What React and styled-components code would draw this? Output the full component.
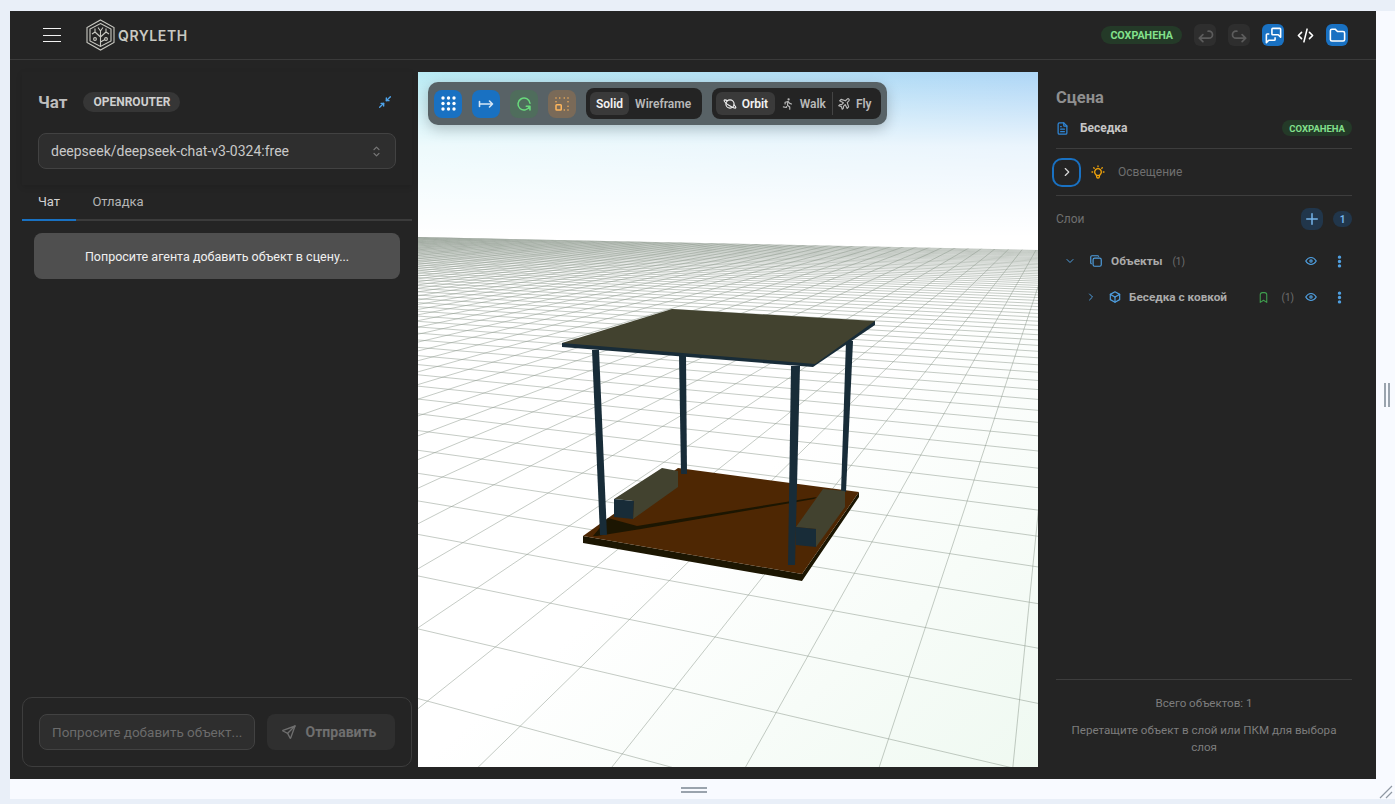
import React from 'react'
import styled, { createGlobalStyle } from 'styled-components'
import {
  TbArrowBack, TbArrowForward, TbMessages, TbCode, TbFolder, TbArrowsDiagonalMinimize2, TbSelector,
  TbFileText, TbChevronRight, TbChevronDown, TbBulb, TbPlus, TbCopy, TbEye, TbDotsVertical, TbBox,
  TbBookmark, TbSend, TbRotate, TbBoxAlignBottomLeft, TbPlanet, TbRun, TbPlaneTilt,
} from 'react-icons/tb'

const GlobalStyle = createGlobalStyle`
  html, body { margin: 0; padding: 0; background: #e9eff8; overflow: hidden; }
  body { font-family: "Roboto", "Noto Sans", sans-serif; }
  * { box-sizing: border-box; }
`

const Page = styled.div`
  width: 1395px;
  height: 804px;
  padding: 11px 0 5px 10px;
`
const Shell = styled.div`
  position: relative;
  width: 100%;
  height: 100%;
  background: #f8faff;
`
const Frame = styled.div`
  width: 1366px;
  height: 768px;
  background: #242424;
  display: flex;
  flex-direction: column;
`
const Header = styled.header`
  height: 49px;
  flex: none;
  border-bottom: 1px solid #3a3a3a;
  display: flex;
  align-items: center;
  padding: 0 28px 0 33px;
`
const Burger = styled.div`
  width: 18px;
  height: 14px;
  display: flex;
  flex-direction: column;
  justify-content: space-between;
  margin-right: 25px;
  span { display: block; height: 1px; background: #f2f2f2; }
`
const Brand = styled.div`
  display: flex;
  align-items: center;
  gap: 3px;
  color: #c9c9c2;
  font-family: "Inter", sans-serif;
  font-size: 14px;
  font-weight: 600;
  letter-spacing: 0.6px;
`
const Spacer = styled.div`
  flex: 1;
`
const Badge = styled.span`
  display: inline-flex;
  align-items: center;
  justify-content: center;
  border-radius: 10px;
  background: #243a28;
  color: #83e08c;
  font-size: ${p => p.$small ? '9.5px' : '10.7px'};
  font-weight: 700;
  height: ${p => p.$small ? '16px' : '18px'};
  padding: 0 ${p => p.$small ? 7 : 9}px;
`
const HeaderButtons = styled.div`
  display: flex;
  align-items: center;
  gap: 12px;
  margin-left: 12px;
`
const IconButton = styled.div`
  width: 22px;
  height: 22px;
  margin: 0 ${p => p.$tight ? '-2px' : '0'};
  border-radius: 6px;
  display: flex;
  align-items: center;
  justify-content: center;
  background: ${p => p.$bg || 'transparent'};
  color: ${p => p.$color || '#fff'};
  font-size: ${p => p.$size || 19}px;
`
const Body = styled.div`
  flex: 1;
  display: flex;
  min-height: 0;
`
const ChatPanel = styled.aside`
  width: 408px;
  flex: none;
  display: flex;
  flex-direction: column;
  padding: 12px 6px 12px 12px;
`
const ChatHead = styled.div`
  display: flex;
  flex-direction: column;
  padding: 20px 16px 16px;
  box-shadow: 0 2px 6px rgba(0, 0, 0, 0.12);
`
const TitleRow = styled.div`
  display: flex;
  align-items: center;
  height: 20px;
  margin-bottom: 21px;
`
const ChatTitle = styled.div`
  color: #bdbdbd;
  font-size: 17px;
  font-weight: 700;
  margin-right: 16px;
`
const GrayPill = styled.span`
  background: #363636;
  color: #d0d0d0;
  font-size: 12px;
  font-weight: 700;
  border-radius: 10px;
  height: 20px;
  padding: 0 10px;
  display: inline-flex;
  align-items: center;
`
const Collapse = styled.div`
  color: #4ea3ea;
  font-size: 16px;
  display: flex;
  margin-right: 3px;
`
const ModelSelect = styled.div`
  height: 36px;
  width: 358px;
  border-radius: 8px;
  background: #2e2e2e;
  border: 1px solid #424242;
  color: #c9c9c9;
  font-size: 14px;
  display: flex;
  align-items: center;
  justify-content: space-between;
  padding: 0 11px 0 12px;
  svg { color: #777; font-size: 15px; }
`
const Tabs = styled.div`
  display: flex;
  border-bottom: 2px solid #3b3b3b;
  height: 37px;
  margin-top: -1px;
`
const Tab = styled.div`
  width: ${p => p.$w}px;
  font-size: 13px;
  text-align: center;
  color: ${p => p.$active ? '#d2d2d2' : '#b5b5b5'};
  line-height: 36px;
  height: 37px;
  border-bottom: 2px solid ${p => p.$active ? '#1971c2' : 'transparent'};
`
const Hint = styled.div`
  margin: 12px 12px 0;
  height: 46px;
  width: 366px;
  border-radius: 8px;
  background: #4f4f4f;
  color: #f0f0f0;
  font-size: 12.5px;
  display: flex;
  align-items: center;
  justify-content: center;
`
const Composer = styled.div`
  margin-top: auto;
  height: 70px;
  border: 1px solid #3d3d3d;
  border-radius: 10px;
  display: flex;
  align-items: center;
  gap: 12px;
  padding: 0 16px;
`
const Input = styled.div`
  width: 216px;
  height: 36px;
  border-radius: 8px;
  background: #2e2e2e;
  border: 1px solid #424242;
  color: #6b6b6b;
  font-size: 13.5px;
  display: flex;
  align-items: center;
  padding: 0 12px;
  white-space: nowrap;
`
const Send = styled.div`
  width: 128px;
  height: 36px;
  border-radius: 8px;
  background: #2f2f2f;
  color: #6f6f6f;
  font-size: 14px;
  font-weight: 700;
  display: flex;
  align-items: center;
  justify-content: center;
  gap: 9px;
  padding-right: 5px;
  svg { font-size: 16px; }
`
const Viewport = styled.main`
  position: relative;
  width: 620px;
  flex: none;
  margin: 12px 0;
  overflow: hidden;
  background: #fff;
`
const Scene = styled.svg`
  display: block;
  width: 620px;
  height: 695px;
`
const Toolbar = styled.div`
  position: absolute;
  top: 10px;
  left: 10px;
  height: 43px;
  border-radius: 10px;
  background: #586266;
  box-shadow: 0 4px 14px rgba(0, 0, 0, 0.22);
  display: flex;
  align-items: center;
  padding: 0 6px;
  gap: 10px;
`
const ToolButton = styled.div`
  width: 28px;
  height: 28px;
  border-radius: 8px;
  display: flex;
  align-items: center;
  justify-content: center;
  background: ${p => p.$bg};
  color: ${p => p.$color};
  font-size: 18px;
`
const Segment = styled.div`
  height: 31px;
  border-radius: 8px;
  background: #242424;
  display: flex;
  align-items: center;
  padding: 0 5px 0 4px;
`
const SegItem = styled.div`
  height: 23px;
  border-radius: 6px;
  padding: 0 ${p => p.$pad ?? 6}px;
  display: flex;
  align-items: center;
  gap: 5px;
  background: ${p => p.$active ? '#3a3a3a' : 'transparent'};
  color: ${p => p.$active ? '#f2f2f2' : '#b9b9b9'};
  font-size: 12px;
  font-weight: 600;
  svg { font-size: 14px; }
`
const SegDivider = styled.div`
  width: 1px;
  height: 23px;
  background: #444;
`
const ScenePanel = styled.aside`
  flex: 1;
  display: flex;
  flex-direction: column;
  padding: 28px 24px 23px 18px;
`
const SceneTitle = styled.div`
  color: #8f8f8f;
  font-size: 16.5px;
  font-weight: 700;
  line-height: 20px;
  margin-bottom: 11px;
`
const FileRow = styled.div`
  display: flex;
  align-items: center;
  height: 18px;
  color: #c6c6c6;
  font-size: 12px;
  font-weight: 700;
  gap: 10px;
  svg { color: #2f86d6; font-size: 15px; margin-left: -1px; }
  span:last-child { margin-left: auto; }
`
const Rule = styled.div`
  height: 1px;
  background: #3d3d3d;
  flex: none;
  margin-top: ${p => p.$top || 0}px;
`
const LightRow = styled.div`
  height: 46px;
  display: flex;
  align-items: center;
  color: #6f6f6f;
  font-size: 12px;
`
const Toggle = styled.div`
  width: 29px;
  height: 29px;
  margin-left: -4px;
  border: 2px solid #1971c2;
  border-radius: 10px;
  color: #d8d8d8;
  display: flex;
  align-items: center;
  justify-content: center;
  font-size: 14px;
  margin-right: 9px;
`
const Bulb = styled.div`
  display: flex;
  color: #f0a30a;
  font-size: 16px;
  margin-right: 12px;
`
const LayersHead = styled.div`
  display: flex;
  align-items: center;
  height: 22px;
  margin-top: 12px;
  margin-bottom: 13px;
  color: #6f6f6f;
  font-size: 12px;
  gap: 10px;
`
const AddLayer = styled.div`
  width: 22px;
  height: 22px;
  margin-left: auto;
  border-radius: 8px;
  background: #21364b;
  color: #74b4ea;
  font-size: 18px;
  display: flex;
  align-items: center;
  justify-content: center;
`
const CountPill = styled.span`
  width: 19px;
  height: 16px;
  border-radius: 8px;
  background: #21364b;
  color: #74b4ea;
  font-size: 10px;
  font-weight: 700;
  display: flex;
  align-items: center;
  justify-content: center;
`
const TreeRow = styled.div`
  display: flex;
  align-items: center;
  height: 36px;
  padding-left: ${p => p.$indent}px;
  padding-right: 5px;
  color: #ababab;
  font-size: 11.8px;
  font-weight: 700;
`
const Chevron = styled.span`
  display: flex;
  color: #4f9fe0;
  font-size: 12px;
  width: ${p => p.$w}px;
`
const TreeIcon = styled.span`
  display: flex;
  color: #4f9fe0;
  font-size: 14px;
  width: ${p => p.$w}px;
`
const TreeCount = styled.span`
  color: #6f6f6f;
  font-weight: 400;
  font-size: 10px;
  margin-left: ${p => p.$left || 0};
`
const RowAction = styled.span`
  display: flex;
  color: ${p => p.$color || '#4f9fe0'};
  font-size: ${p => p.$size || 14}px;
  margin-left: ${p => p.$left || 0};
  svg { stroke-width: ${p => p.$heavy ? 3.5 : 2}; }
`
const SceneFoot = styled.div`
  margin-top: auto;
  text-align: center;
  color: #7d7d7d;
  font-size: 11.6px;
  line-height: 17px;
`
const FootTotal = styled.div`
  padding: 15px 0 10px;
`
const FootNote = styled.div`
  padding: 0 10px;
`
const SideHandle = styled.div`
  position: absolute;
  left: 1374px;
  top: 372px;
  width: 6px;
  height: 24px;
  border-left: 2px solid #9aa3ad;
  border-right: 2px solid #9aa3ad;
`
const BottomHandle = styled.div`
  position: absolute;
  left: 671px;
  top: 776px;
  width: 26px;
  height: 6px;
  border-top: 2px solid #9aa3ad;
  border-bottom: 2px solid #9aa3ad;
`
const Corner = styled.svg`
  position: absolute;
  right: 2px;
  bottom: 0;
`

// grid crossings read off the screenshot: [u, v, x, y] in page pixels
const crossings = [
  [0, 0, 854.7, 573.3], [1, 0, 938.7, 586.7], [2, 0, 1029, 602.3],
  [0, 1, 833.3, 610.7], [1, 1, 925.3, 627.7], [2, 1, 1025, 646],
  [0, 2, 808, 656], [1, 2, 909.3, 676.7], [2, 2, 1019.3, 699.3], [1, 3, 888.7, 739],
  [-3, 2, 550.3, 603.3], [-4, 2, 476.3, 588.3], [-3, 3, 495.3, 647.3], [-2, 3, 580.7, 667.3],
  [-4, 3, 418, 627.7], [-3, 4, 427.3, 701.3], [-2, 4, 519.7, 726],
]

const solve = (a, b) => {
  const n = b.length
  const m = a.map((r, i) => [...r, b[i]])
  for (let i = 0; i < n; i++) {
    let p = i
    for (let k = i + 1; k < n; k++) if (Math.abs(m[k][i]) > Math.abs(m[p][i])) p = k
    ;[m[i], m[p]] = [m[p], m[i]]
    for (let k = 0; k < n; k++) {
      if (k === i) continue
      const f = m[k][i] / m[i][i]
      for (let j = i; j <= n; j++) m[k][j] -= f * m[i][j]
    }
  }
  return m.map((r, i) => r[n] / r[i])
}

// least squares homography from grid indices to viewport pixels
const fitHomography = () => {
  const rows = []
  const rhs = []
  crossings.forEach(([u, v, px, py]) => {
    const x = px - 418
    const y = py - 72
    rows.push([u, v, 1, 0, 0, 0, -u * x, -v * x]); rhs.push(x)
    rows.push([0, 0, 0, u, v, 1, -u * y, -v * y]); rhs.push(y)
  })
  const ata = Array.from({ length: 8 }, (_, i) => Array.from({ length: 8 }, (_, j) =>
    rows.reduce((s, r) => s + r[i] * r[j], 0)))
  const atb = Array.from({ length: 8 }, (_, i) => rows.reduce((s, r, k) => s + r[i] * rhs[k], 0))
  return solve(ata, atb)
}

const H = fitHomography()
const weight = (u, v) => H[6] * u + H[7] * v + 1
const project = (u, v) => {
  const w = weight(u, v)
  return [(H[0] * u + H[1] * v + H[2]) / w, (H[3] * u + H[4] * v + H[5]) / w]
}

const REACH = 140
const MIN_W = 0.15

const gridPath = () => {
  let d = ''
  const seg = (a, b) => {
    const wa = weight(a[0], a[1])
    const wb = weight(b[0], b[1])
    if (wa < MIN_W && wb < MIN_W) return
    let s = a
    let e = b
    if (wa < MIN_W) {
      const t = (MIN_W - wa) / (wb - wa)
      s = [a[0] + t * (b[0] - a[0]), a[1] + t * (b[1] - a[1])]
    } else if (wb < MIN_W) {
      const t = (MIN_W - wa) / (wb - wa)
      e = [a[0] + t * (b[0] - a[0]), a[1] + t * (b[1] - a[1])]
    }
    const p = project(s[0], s[1])
    const q = project(e[0], e[1])
    d += `M${p[0].toFixed(1)} ${p[1].toFixed(1)}L${q[0].toFixed(1)} ${q[1].toFixed(1)}`
  }
  for (let i = -REACH; i <= REACH; i++) {
    seg([i, -REACH], [i, REACH])
    seg([-REACH, i], [REACH, i])
  }
  return d
}

function SceneView() {
  return (
    <Scene viewBox="0 0 620 695">
      <defs>
        <linearGradient id="skyTint" x1="0" y1="0" x2="1" y2="0">
          <stop offset="0" stopColor="#b9ebf4" />
          <stop offset="1" stopColor="#aed6f6" />
        </linearGradient>
        <linearGradient id="skyFade" x1="0" y1="0" x2="0" y2="1">
          <stop offset="0" stopColor="#fff" stopOpacity="0" />
          <stop offset="0.45" stopColor="#fff" stopOpacity="0.75" />
          <stop offset="1" stopColor="#fff" stopOpacity="1" />
        </linearGradient>
        <linearGradient id="ground" x1="0" y1="0" x2="1" y2="1">
          <stop offset="0.5" stopColor="#ffffff" />
          <stop offset="1" stopColor="#eff9f1" />
        </linearGradient>
        <clipPath id="plane">
          <polygon points="0,165 620,178 620,695 0,695" />
        </clipPath>
      </defs>
      <rect width="620" height="180" fill="url(#skyTint)" />
      <rect width="620" height="165" fill="url(#skyFade)" />
      <rect y="164" width="620" height="20" fill="#fff" />
      <polygon points="0,165 620,178 620,695 0,695" fill="url(#ground)" />
      <g clipPath="url(#plane)">
        <path d={gridPath()} fill="none" stroke="#8a968b" strokeWidth="0.5" />
      </g>

      {/* floor slab */}
      <polygon points="165,464 384,502 441,420 441,425 384,509 165,471" fill="#1c1602" />
      <polygon points="165,464 384,502 441,420 260,396" fill="#4e2703" />
      <polygon points="175,464 190,446 219,454 399,425 396,427 223,457 179,464" fill="#1c1602" />
      {/* back posts */}
      <polygon points="261,283 268,283 269,402 263,402" fill="#182c38" />
      <polygon points="428,269 435,269 428,420 423,420" fill="#182c38" />
      {/* benches */}
      <polygon points="196,427 244,396 260,399 260,415 215,447 216,429" fill="#42422f" />
      <polygon points="196,427 216,429 215,447 196,445" fill="#182c38" />
      <polygon points="405,417 427,419 427,435 398,475 398,457 378,455" fill="#42422f" />
      <polygon points="378,455 398,457 398,475 378,473" fill="#182c38" />
      {/* front posts */}
      <polygon points="174,278 181,278 189,463 182,463" fill="#182c38" />
      <polygon points="373,294 382,294 377,493 370,493" fill="#182c38" />
      {/* roof */}
      <polygon points="144,271 144,275 395,295 457,253 457,249" fill="#182c38" />
      <polygon points="144,271 397,292 457,249 254,237" fill="#42422f" />
    </Scene>
  )
}

function Logo() {
  return (
    <svg width="29" height="32" viewBox="0 0 29 32" fill="none" stroke="#c9c9c2" strokeWidth="1.1">
      <path d="M14.5 1 28 8.5V23.5L14.5 31 1 23.5V8.5Z" />
      <path d="M14.5 4.5 25 10V22L14.5 27.5 4 22V10Z" />
      <path d="M14.5 27.5V12M14.5 18 9 13M14.5 18 20 13M9 13 6 15M9 13V9.5M20 13 23 15M20 13V9.5M14.5 12 12 8.5M14.5 12 17 8.5M14.5 23 19 20.5" />
      <circle cx="20" cy="20" r="1.4" />
      <circle cx="9" cy="20" r="1.4" />
    </svg>
  )
}

function DotGrid() {
  const dots = []
  for (let r = 0; r < 3; r++) for (let c = 0; c < 3; c++) dots.push(<circle key={`${r}-${c}`} cx={3 + c * 5.5} cy={3 + r * 5.5} r="1.7" />)
  return <svg width="17" height="17" viewBox="0 0 17 17" fill="#fff">{dots}</svg>
}

function MeasureArrow() {
  return (
    <svg width="18" height="18" viewBox="0 0 18 18" fill="none" stroke="#d6e6f5" strokeWidth="1.6" strokeLinecap="round" strokeLinejoin="round">
      <path d="M2.5 6.5v5M2.5 9h13M12.5 6l3 3-3 3" />
    </svg>
  )
}

export default function App() {
  return (
    <>
      <GlobalStyle />
      <Page>
        <Shell>
          <Frame>
            <Header>
              <Burger><span /><span /><span /></Burger>
              <Brand><Logo />QRYLETH</Brand>
              <Spacer />
              <Badge>СОХРАНЕНА</Badge>
              <HeaderButtons>
                <IconButton $bg="#2e2e2e" $color="#5c5c5c" $size={21}><TbArrowBack /></IconButton>
                <IconButton $bg="#2e2e2e" $color="#5c5c5c" $size={21}><TbArrowForward /></IconButton>
                <IconButton $bg="#1971c2"><TbMessages /></IconButton>
                <IconButton $tight><TbCode /></IconButton>
                <IconButton $bg="#1971c2"><TbFolder /></IconButton>
              </HeaderButtons>
            </Header>
            <Body>
              <ChatPanel>
                <ChatHead>
                  <TitleRow>
                    <ChatTitle>Чат</ChatTitle>
                    <GrayPill>OPENROUTER</GrayPill>
                    <Spacer />
                    <Collapse><TbArrowsDiagonalMinimize2 /></Collapse>
                  </TitleRow>
                  <ModelSelect>deepseek/deepseek-chat-v3-0324:free<TbSelector /></ModelSelect>
                </ChatHead>
                <Tabs>
                  <Tab $active $w={54}>Чат</Tab>
                  <Tab $w={84}>Отладка</Tab>
                </Tabs>
                <Hint>Попросите агента добавить объект в сцену...</Hint>
                <Composer>
                  <Input>Попросите добавить объект...</Input>
                  <Send><TbSend />Отправить</Send>
                </Composer>
              </ChatPanel>
              <Viewport>
                <SceneView />
                <Toolbar>
                  <ToolButton $bg="#1971c2" $color="#fff"><DotGrid /></ToolButton>
                  <ToolButton $bg="#1971c2" $color="#fff"><MeasureArrow /></ToolButton>
                  <ToolButton $bg="#4f6d5c" $color="#69db7c"><TbRotate /></ToolButton>
                  <ToolButton $bg="#7a6a58" $color="#ffb65c"><TbBoxAlignBottomLeft /></ToolButton>
                  <Segment>
                    <SegItem $active>Solid</SegItem>
                    <SegItem>Wireframe</SegItem>
                  </Segment>
                  <Segment>
                    <SegItem $active $pad={6.5}><TbPlanet />Orbit</SegItem>
                    <SegItem $pad={6}><TbRun />Walk</SegItem>
                    <SegDivider />
                    <SegItem $pad={4}><TbPlaneTilt />Fly</SegItem>
                  </Segment>
                </Toolbar>
              </Viewport>
              <ScenePanel>
                <SceneTitle>Сцена</SceneTitle>
                <FileRow>
                  <TbFileText />
                  <span>Беседка</span>
                  <Badge $small>СОХРАНЕНА</Badge>
                </FileRow>
                <Rule $top={11} />
                <LightRow>
                  <Toggle><TbChevronRight /></Toggle>
                  <Bulb><TbBulb /></Bulb>
                  Освещение
                </LightRow>
                <Rule />
                <LayersHead>
                  Слои
                  <AddLayer><TbPlus /></AddLayer>
                  <CountPill>1</CountPill>
                </LayersHead>
                <TreeRow $indent={8}>
                  <Chevron $w={25}><TbChevronDown /></Chevron>
                  <TreeIcon $w={22}><TbCopy /></TreeIcon>
                  Объекты
                  <TreeCount $left="10px">(1)</TreeCount>
                  <RowAction $left="auto"><TbEye /></RowAction>
                  <RowAction $left="14px" $size={15} $heavy><TbDotsVertical /></RowAction>
                </TreeRow>
                <TreeRow $indent={29}>
                  <Chevron $w={23}><TbChevronRight /></Chevron>
                  <TreeIcon $w={21}><TbBox /></TreeIcon>
                  Беседка с ковкой
                  <RowAction $left="auto" $color="#3f9d4e" $size={13}><TbBookmark /></RowAction>
                  <TreeCount $left="11px">(1)</TreeCount>
                  <RowAction $left="10px"><TbEye /></RowAction>
                  <RowAction $left="14px" $size={15} $heavy><TbDotsVertical /></RowAction>
                </TreeRow>
                <SceneFoot>
                  <Rule />
                  <FootTotal>Всего объектов: 1</FootTotal>
                  <FootNote>Перетащите объект в слой или ПКМ для выбора слоя</FootNote>
                </SceneFoot>
              </ScenePanel>
            </Body>
          </Frame>
          <SideHandle />
          <BottomHandle />
          <Corner width="14" height="14" viewBox="0 0 14 14" stroke="#8f98a3" strokeWidth="1.2">
            <path d="M1 13 13 1M7 13 13 7" />
          </Corner>
        </Shell>
      </Page>
    </>
  )
}
